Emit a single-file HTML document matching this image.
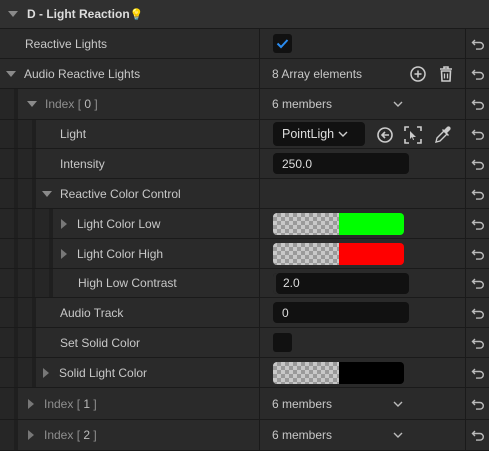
<!DOCTYPE html>
<html><head><meta charset="utf-8"><style>
*{margin:0;padding:0;box-sizing:border-box}
body{width:489px;height:451px;background:#1c1c1c;font-family:"Liberation Sans",sans-serif;font-size:12px;color:#c8c8c8;position:relative;overflow:hidden}
.r{position:absolute;left:0;width:489px;background:#2a2a2a;border-bottom:1px solid #1a1a1a}
.s{position:absolute;top:0;bottom:0}
.n{position:absolute;top:0;bottom:0;display:flex;align-items:center;white-space:nowrap}
.v{position:absolute;left:259px;top:0;bottom:0;width:206px;border-left:1px solid #1a1a1a;display:flex;align-items:center}
.rs{position:absolute;left:465px;top:0;bottom:0;width:24px;border-left:1px solid #1a1a1a;display:flex;align-items:center;justify-content:center}
.tri{width:0;height:0;border-left:5px solid transparent;border-right:5px solid transparent;border-top:6px solid #8a8a8a;margin-right:8px}
.trr{width:0;height:0;border-top:5px solid transparent;border-bottom:5px solid transparent;border-left:6px solid #777;margin-right:10px}
.g{color:#8f8f8f}
.box{background:#111;border-radius:4px;height:21px;display:flex;align-items:center;padding-left:9px;color:#ddd}
.col{width:131px;height:22px;border-radius:4px;overflow:hidden;display:flex;margin-left:13px}
.chk{width:66px;background-color:#c8c8c8;background-image:linear-gradient(45deg,#9a9a9a 25%,transparent 25%,transparent 75%,#9a9a9a 75%),linear-gradient(45deg,#9a9a9a 25%,transparent 25%,transparent 75%,#9a9a9a 75%);background-size:8px 8px;background-position:0 0,4px 4px}
</style></head><body>
<svg width="0" height="0" style="position:absolute"><defs><symbol id="u" viewBox="0 0 14 12"><path d="M4 2L1.5 4.5L4 7M1.5 4.5H9a3.3 3.3 0 0 1 0 6.6H5" fill="none" stroke="#bbb" stroke-width="1.4"/></symbol></defs></svg>

<div class="r" style="top:0;height:29px;background:#303030"><div class="n" style="left:8px;font-weight:bold;color:#ddd"><div class="tri" style="margin-right:9px"></div>D - Light Reaction<span style="color:#f2d64a;font-size:11px">💡</span></div></div>

<div class="r" style="top:29px;height:30px"><div class="n" style="left:25px">Reactive Lights</div>
<div class="v"><div style="margin-left:13px;width:19px;height:19px;background:#111;border-radius:3px;display:flex;align-items:center;justify-content:center"><svg width="13" height="11"><path d="M1.5 5.5L5 9L11.5 2" fill="none" stroke="#2a8cf0" stroke-width="2"/></svg></div></div><div class="rs"><svg width="14" height="12"><use href="#u"/></svg></div></div>

<div class="r" style="top:59px;height:30px"><div class="n" style="left:6px"><div class="tri"></div>Audio Reactive Lights</div>
<div class="v"><span style="margin-left:12px">8 Array elements</span>
<svg style="position:absolute;left:150px;top:7px" width="16" height="16"><circle cx="8" cy="8" r="7" fill="none" stroke="#ccc" stroke-width="1.5"/><path d="M8 4.5V11.5M4.5 8H11.5" stroke="#ccc" stroke-width="1.5"/></svg>
<svg style="position:absolute;left:178px;top:6px" width="16" height="18"><path d="M2 4H14M6 4V2H10V4M3.5 6H12.5L12 16H4Z" fill="none" stroke="#ccc" stroke-width="1.6"/><path d="M6.5 8.5V13.5M9.5 8.5V13.5" stroke="#ccc" stroke-width="1.3"/></svg></div><div class="rs"><svg width="14" height="12"><use href="#u"/></svg></div></div>

<div id="l1"></div>
<script>
const U='<div class="rs"><svg width="14" height="12"><use href="#u"/></svg></div>';
const rows=[
[89,31,1,'<div class="tri"></div><span class="g">Index [ <span style="color:#bbb">0</span> ]</span>',27,'<span style="margin-left:12px">6 members</span><svg style="position:absolute;left:133px;top:12px" width="10" height="7"><path d="M1 1L5 5L9 1" fill="none" stroke="#bbb" stroke-width="1.4"/></svg>'],
[120,29,2,'Light',60,'<div class="box" style="margin-left:13px;width:92px;height:24px;font-size:12.5px">PointLigh<svg style="margin-left:4px" width="10" height="7"><path d="M1 1L5 5L9 1" fill="none" stroke="#ccc" stroke-width="1.4"/></svg></div><svg style="position:absolute;left:116px;top:6px" width="18" height="18"><circle cx="9" cy="9" r="7" fill="none" stroke="#ccc" stroke-width="1.6"/><path d="M13 9H6M9 6L6 9L9 12" fill="none" stroke="#ccc" stroke-width="1.6"/></svg><svg style="position:absolute;left:144px;top:6px" width="18" height="18"><path d="M1 5V1H5M13 1H17V5M17 13V17H13M5 17H1V13" fill="none" stroke="#ccc" stroke-width="1.6"/><path d="M6 5L12 11L9 11L10 14L9 14L8 11L6 13Z" fill="#ccc"/></svg><svg style="position:absolute;left:174px;top:5px" width="18" height="19"><path d="M2 17L3 13L10 6L13 9L6 16Z" fill="none" stroke="#ccc" stroke-width="1.4"/><path d="M10 5L13 2a2 2 0 0 1 3 3L13 8L15 10L14 11L8 5L9 4Z" fill="#ccc"/></svg>'],
[149,30,2,'Intensity',60,'<div class="box" style="margin-left:13px;width:136px">250.0</div>'],
[179,30,2,'<div class="tri"></div>Reactive Color Control',42,''],
[209,30,3,'<div class="trr"></div>Light Color Low',61,'<div class="col"><div class="chk"></div><div style="flex:1;background:#0f0"></div></div>'],
[239,30,3,'<div class="trr"></div>Light Color High',61,'<div class="col"><div class="chk"></div><div style="flex:1;background:#f00"></div></div>'],
[269,29,3,'High Low Contrast',78,'<div class="box" style="margin-left:13px;width:136px;padding-left:10px;box-shadow:inset 3px 0 0 #2a2a2a">2.0</div>'],
[298,30,2,'Audio Track',60,'<div class="box" style="margin-left:13px;width:136px">0</div>'],
[328,30,2,'Set Solid Color',60,'<div style="margin-left:13px;width:19px;height:19px;background:#111;border-radius:3px"></div>'],
[358,30,2,'<div class="trr"></div>Solid Light Color',43,'<div class="col"><div class="chk"></div><div style="flex:1;background:#000"></div></div>'],
[388,32,1,'<div class="trr"></div><span class="g">Index [ <span style="color:#bbb">1</span> ]</span>',28,'<span style="margin-left:12px">6 members</span><svg style="position:absolute;left:133px;top:13px" width="10" height="7"><path d="M1 1L5 5L9 1" fill="none" stroke="#bbb" stroke-width="1.4"/></svg>'],
[420,31,1,'<div class="trr"></div><span class="g">Index [ <span style="color:#bbb">2</span> ]</span>',28,'<span style="margin-left:12px">6 members</span><svg style="position:absolute;left:133px;top:12px" width="10" height="7"><path d="M1 1L5 5L9 1" fill="none" stroke="#bbb" stroke-width="1.4"/></svg>']
];
let h='';
for(const [t,ht,l,name,nx,val] of rows){
 let s='';
 for(let i=0;i<l;i++){const x=i*17.5;s+=`<div class="s" style="left:${x}px;width:14px;background:#262626"></div><div class="s" style="left:${x+14}px;width:4px;background:#1f1f1f"></div>`;}
 h+=`<div class="r" style="top:${t}px;height:${ht}px">${s}<div class="n" style="left:${nx}px">${name}</div><div class="v">${val}</div>${U}</div>`;
}
document.getElementById('l1').outerHTML=h;
</script>
</body></html>
